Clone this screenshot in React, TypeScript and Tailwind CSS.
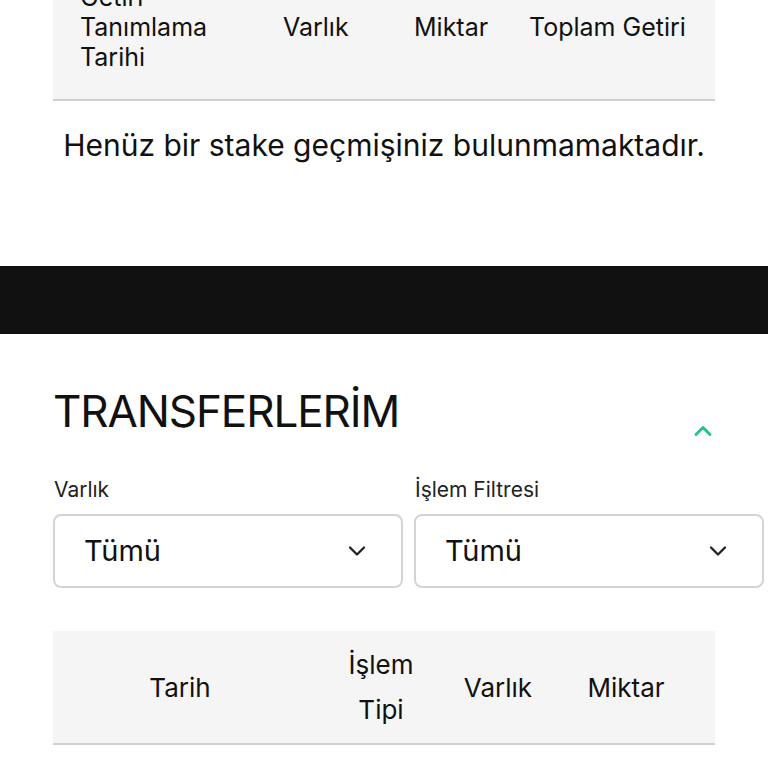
import { ChevronDown, ChevronUp } from "lucide-react";

const font = { fontFamily: "Inter, 'Noto Sans', sans-serif" };

function SelectBox({ value }: { value: string }) {
  return (
    <div className="flex h-[74px] w-[350px] shrink-0 items-center justify-between rounded-lg border-2 border-[#d4d4d4] bg-white pl-[29px] pr-[30px]">
      <span className="text-[29px] text-[#111]">{value}</span>
      <ChevronDown className="h-7 w-7 text-[#222]" strokeWidth={2} />
    </div>
  );
}

export default function App() {
  return (
    <div className="min-h-[768px] overflow-hidden bg-white text-[#111]" style={font}>
      {/* stake history table, scrolled partly out of view */}
      <div className="mx-[53px] -mt-[49px] w-[662px]">
        <div className="grid grid-cols-[203px_131px_115px_1fr] items-center border-b-2 border-[#d0d0d0] bg-[#f5f5f5] pb-[27px] pt-[31px] text-[25px] leading-[30px]">
          <div className="pl-[27px]">
            Getiri
            <br />
            Tanımlama
            <br />
            Tarihi
          </div>
          <div className="pl-[27px]">Varlık</div>
          <div className="pl-[27px]">Miktar</div>
          <div className="whitespace-nowrap pl-[27px]">Toplam Getiri</div>
        </div>
        <p className="mt-[26px] whitespace-nowrap text-center text-[30px] leading-[36px]">
          Henüz bir stake geçmişiniz bulunmamaktadır.
        </p>
      </div>

      <div className="mt-[103px] h-[68px] w-full bg-[#111111]" />

      <div className="ml-[53px] w-[662px]">
        <div className="mt-[51px] flex items-start justify-between">
          <h2 className="text-[44px] leading-[52px] tracking-tight">TRANSFERLERİM</h2>
          <ChevronUp className="mr-[-2px] mt-[32px] h-7 w-7 text-[#22c38e]" strokeWidth={2.5} />
        </div>

        <div className="mt-[33px] flex gap-[11px]">
          <div className="flex flex-col">
            <span className="mb-[12px] pl-[1px] text-[21px] leading-[24px] text-[#222]">Varlık</span>
            <SelectBox value="Tümü" />
          </div>
          <div className="flex flex-col">
            <span className="mb-[12px] pl-[1px] text-[21px] leading-[24px] text-[#222]">İşlem Filtresi</span>
            <SelectBox value="Tümü" />
          </div>
        </div>

        <div className="mt-[43px] grid grid-cols-[254px_148px_86px_170px_1fr] items-center border-b-2 border-[#d0d0d0] bg-[#f5f5f5] py-[11px] text-[26px] leading-[45px]">
          <div className="text-center">Tarih</div>
          <div className="mx-auto w-[80px] text-center">İşlem Tipi</div>
          <div className="text-center">Varlık</div>
          <div className="text-center">Miktar</div>
          <div />
        </div>
      </div>
    </div>
  );
}
